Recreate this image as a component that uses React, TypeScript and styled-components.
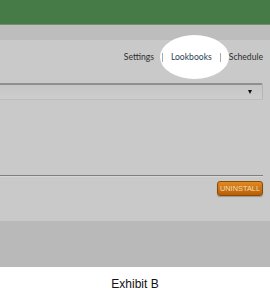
import styled, { createGlobalStyle } from 'styled-components';

const GlobalStyle = createGlobalStyle`
  html, body {
    margin: 0;
    padding: 0;
    background: #ffffff;
  }
`;

const Frame = styled.div`
  width: 270px;
  height: 291px;
  display: flex;
  flex-direction: column;
  overflow: hidden;
  background: #ffffff;
`;

const TopBar = styled.div`
  height: 24px;
  background: #467a47;
  border-bottom: 1px solid #6f8f6f;
`;

const SubBar = styled.div`
  height: 15px;
  background: #bdbdbd;
`;

const Panel = styled.div`
  height: 182px;
  background: #c9c9c9;
  display: flex;
  flex-direction: column;
  padding-right: 7px;
`;

const Nav = styled.nav`
  position: relative;
  height: 43px;
  box-sizing: border-box;
  padding-top: 11px;
  display: flex;
  justify-content: flex-end;
  align-items: flex-start;
  gap: 8px;
  font-family: Lato, 'Open Sans', sans-serif;
  font-size: 8.6px;
  line-height: 12px;
  color: #2e2e2e;
`;

const Spot = styled.div`
  position: absolute;
  left: 160px;
  top: -5px;
  width: 69px;
  height: 44px;
  border-radius: 50%;
  background: #ffffff;
  filter: blur(0.6px);
`;

const NavLink = styled.span<{ $active?: boolean }>`
  position: relative;
  color: ${(p) => (p.$active ? '#2c3e50' : '#2e2e2e')};
`;

const Sep = styled.span`
  position: relative;
  width: 1px;
  height: 9px;
  margin-top: 2px;
  background: #a9a9a9;
`;

const Select = styled.div`
  height: 14px;
  background: linear-gradient(#c6c6c6, #cdcdcd);
  border-top: 2px solid #8f8f8f;
  border-right: 1px solid #b5b5b5;
  border-bottom: 1px solid #bdbdbd;
  border-radius: 0 2px 2px 0;
  display: flex;
  justify-content: flex-end;
  align-items: center;
  padding-right: 10px;
`;

const Arrow = styled.span`
  width: 0;
  height: 0;
  border-left: 2.5px solid transparent;
  border-right: 2.5px solid transparent;
  border-top: 4px solid #111111;
`;

const Spacer = styled.div`
  flex: 1;
`;

const Divider = styled.div`
  height: 1px;
  background: #7e7e7e;
  border-bottom: 1px solid #d6d6d6;
`;

const Actions = styled.div`
  height: 44px;
  display: flex;
  justify-content: flex-end;
  align-items: flex-start;
  padding-top: 4px;
  box-sizing: border-box;
`;

const UninstallButton = styled.button`
  width: 46px;
  height: 15px;
  padding: 0;
  border: 1px solid #8a4a08;
  border-radius: 3px;
  background: linear-gradient(#e08a22, #b85f05);
  box-shadow: 0 1px 1px rgba(0, 0, 0, 0.25);
  color: #f4dcb4;
  font-family: 'Liberation Sans', Arial, sans-serif;
  font-size: 7.4px;
  letter-spacing: 0;
`;

const LowerArea = styled.div`
  height: 46px;
  background: #b9b9b9;
`;

const Caption = styled.div`
  flex: 1;
  display: flex;
  justify-content: center;
  align-items: flex-start;
  padding-top: 10px;
  font-family: 'Liberation Sans', Arial, sans-serif;
  font-size: 12px;
  line-height: 14px;
  color: #111111;
`;

export default function App() {
  return (
    <>
      <GlobalStyle />
      <Frame>
        <TopBar />
        <SubBar />
        <Panel>
          <Nav>
            <Spot />
            <NavLink>Settings</NavLink>
            <Sep />
            <NavLink $active>Lookbooks</NavLink>
            <Sep />
            <NavLink>Schedule</NavLink>
          </Nav>
          <Select>
            <Arrow />
          </Select>
          <Spacer />
          <Divider />
          <Actions>
            <UninstallButton>UNINSTALL</UninstallButton>
          </Actions>
        </Panel>
        <LowerArea />
        <Caption>Exhibit B</Caption>
      </Frame>
    </>
  );
}
